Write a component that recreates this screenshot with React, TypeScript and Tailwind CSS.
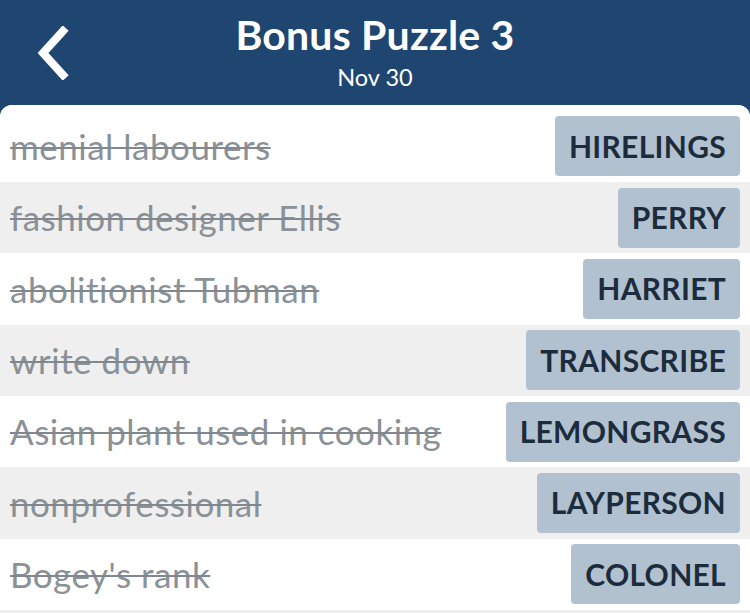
const clues = [
  { hint: "menial labourers", answer: "HIRELINGS" },
  { hint: "fashion designer Ellis", answer: "PERRY" },
  { hint: "abolitionist Tubman", answer: "HARRIET" },
  { hint: "write down", answer: "TRANSCRIBE" },
  { hint: "Asian plant used in cooking", answer: "LEMONGRASS" },
  { hint: "nonprofessional", answer: "LAYPERSON" },
  { hint: "Bogey's rank", answer: "COLONEL" },
];

const App = () => {
  return (
    <div className="w-[750px] h-[613px] overflow-hidden bg-[#1f4671] font-['Lato',sans-serif]">
      <header className="relative h-[105px] flex flex-col items-center text-white">
        <button className="absolute left-[30px] top-[24px] w-[44px] h-[58px] flex items-center justify-center">
          <svg width="36" height="54" viewBox="0 0 36 54">
            <polyline
              points="29,5 9,27 29,49"
              fill="none"
              stroke="white"
              strokeWidth="8"
              strokeLinecap="square"
              strokeLinejoin="miter"
            />
          </svg>
        </button>
        <h1 className="mt-[9px] text-[41px] leading-[52px] font-bold tracking-[0.2px]">Bonus Puzzle 3</h1>
        <p className="mt-[1px] text-[23.5px] leading-[30px]">Nov 30</p>
      </header>

      <div className="bg-[#efefef] rounded-t-[12px] overflow-hidden h-[508px]">
        <div className="bg-white h-[5.67px]" />
        {clues.map((c, i) => (
          <div
            key={c.answer}
            className={`h-[71.33px] flex items-center justify-between pl-[10px] pr-[10px] ${
              i % 2 === 1 ? "bg-[#efefef]" : "bg-white"
            }`}
          >
            <span className="text-[35px] tracking-[0.5px] text-[#8a9197] line-through decoration-[2px] decoration-[#80878e]">
              {c.hint}
            </span>
            <span className="h-[60px] px-[14px] flex items-center rounded-[4px] bg-[#b1c1cf] text-[#1d2c3c] text-[30px] font-bold tracking-[0.3px]">
              {c.answer}
            </span>
          </div>
        ))}
      </div>
    </div>
  );
};

export default App;
